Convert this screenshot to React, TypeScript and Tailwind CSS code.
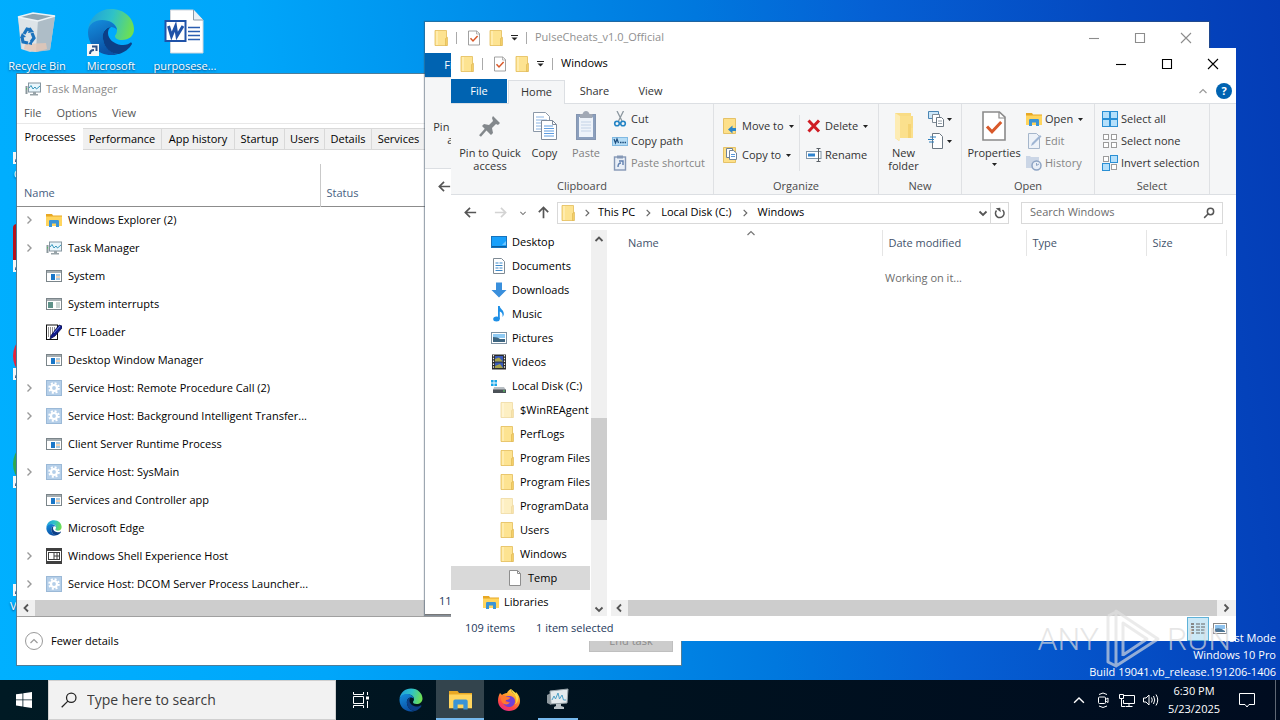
import type { ReactNode } from "react";

type IconProps = { className?: string };

/* ---------- icons ---------- */

function Folder({ className = "h-4 w-4", pale = false }: IconProps & { pale?: boolean }) {
  return (
    <svg viewBox="0 0 16 16" className={`shrink-0 ${className}`} opacity={pale ? 0.55 : 1} aria-hidden="true">
      <path d="M2 .5h11.500v15H2z" fill="#fde391" stroke="#e3bd58" strokeWidth=".8" />
      <path d="M3 1h2v14H3z" fill="#fff0bb" opacity=".7" />
      <path d="M12.500 8.500l2-1.200v8.200h-2z" fill="#f4cf68" stroke="#dcb44d" strokeWidth=".6" />
    </svg>
  );
}

function BigFolder() {
  return (
    <svg viewBox="0 0 32 32" className="h-8 w-8" aria-hidden="true">
      <path d="M7 3h16v3h2v22H12l-1 3-4-3z" fill="#f9dc85" />
      <path d="M7 3l5 3v25l-5-3z" fill="#fdecb4" />
      <path d="M12 6h11v12h2v10H12z" fill="#fbe08d" />
      <path d="M20 14h3v14h-3z" fill="#f1c95f" opacity=".55" />
    </svg>
  );
}

function ExplorerIcon({ className = "h-4 w-4" }: IconProps) {
  return (
    <svg viewBox="0 0 16 16" className={`shrink-0 ${className}`} aria-hidden="true">
      <path d="M0 2h6l1 1.500h9V14H0z" fill="#e8a824" />
      <path d="M0 4.500h16V14H0z" fill="#ffd55e" />
      <path d="M3 15V9.200q0-1.200 1.200-1.200h7.600Q13 8 13 9.200V15h-3v-3.500H6V15z" fill="#3a94d6" />
    </svg>
  );
}

function TaskMgrIcon({ className = "h-4 w-4" }: IconProps) {
  return (
    <svg viewBox="0 0 16 16" className={`shrink-0 ${className}`} aria-hidden="true">
      <path d="M.5 5h2v8h-2z" fill="#8b979c" />
      <path d="M1 7h1v1.500H1z" fill="#52b964" />
      <rect x="3.500" y="2" width="12" height="9" fill="#e9f6fc" stroke="#8696a0" />
      <path d="M4 7l2-2.500L8 8l2-2 1.500 2L15 5" fill="none" stroke="#3897bc" />
      <path d="M8 11h3v2h2v1.500H5V13h3z" fill="#98a3a8" />
    </svg>
  );
}

function AppIcon({ green = false }: { green?: boolean }) {
  return (
    <svg viewBox="0 0 16 16" className="h-4 w-4 shrink-0" aria-hidden="true">
      <rect x=".5" y="2.500" width="15" height="11" fill="#fff" stroke="#7b858a" />
      <path d="M1 3h14v2H1z" fill="#a5adb1" />
      <rect x={green ? 2 : 5} y="6" width={green ? 5 : 4} height="6" fill={green ? "#5e9188" : "#1976c8"} />
      <path d="M10 7h4M10 11h4" stroke={green ? "#97aca8" : "#4f93c4"} />
      <path d="M10 9h4" stroke={green ? "#97aca8" : "#e3a368"} />
    </svg>
  );
}

function GearIcon() {
  return (
    <svg viewBox="0 0 16 16" className="h-4 w-4 shrink-0" aria-hidden="true">
      <rect x=".5" y=".5" width="15" height="15" fill="#b5cfe9" stroke="#9bb9d7" />
      <circle cx="8" cy="8" r="4.800" fill="none" stroke="#fff" strokeWidth="2" strokeDasharray="2 1.770" />
      <circle cx="8" cy="8" r="3" fill="none" stroke="#fff" strokeWidth="2.200" />
    </svg>
  );
}

function CtfIcon() {
  return (
    <svg viewBox="0 0 16 16" className="h-4 w-4 shrink-0" aria-hidden="true">
      <rect x=".5" y="1" width="11" height="14.500" fill="#fff" stroke="#111" />
      <path d="M2 4h7M2 6h7M2 8h6M2 10h5M2 12h4" stroke="#222" strokeDasharray="1 1" />
      <path d="M5 11.500L13 1l3 1v2L9 12l-5 3z" fill="#101c8c" stroke="#060a40" strokeWidth=".7" />
      <path d="M8 9l6-7" stroke="#6e7fe8" />
    </svg>
  );
}

function ShellIcon() {
  return (
    <svg viewBox="0 0 16 16" className="h-4 w-4 shrink-0" aria-hidden="true">
      <rect x=".5" y="1" width="15" height="14" fill="#fff" stroke="#3f3f3f" />
      <path d="M0 0h16v3H0zM0 13h16v3H0z" fill="#3f3f3f" />
      <rect x="2.500" y="4.500" width="11" height="7" fill="#fff" stroke="#3f3f3f" />
      <path d="M8 5v6M8 8h5M11 5v6" stroke="#3f3f3f" />
    </svg>
  );
}

function EdgeIcon({ className = "h-4 w-4", id }: IconProps & { id: string }) {
  return (
    <svg viewBox="0 0 48 48" className={`shrink-0 ${className}`} aria-hidden="true">
      <defs>
        <linearGradient id={`${id}a`} x1="0" y1=".3" x2="1" y2=".5">
          <stop offset="0" stopColor="#1ea0dc" />
          <stop offset=".5" stopColor="#2fc2c8" />
          <stop offset="1" stopColor="#6fe04f" />
        </linearGradient>
        <linearGradient id={`${id}b`} x1="0" y1="0" x2=".4" y2="1">
          <stop offset="0" stopColor="#1490df" />
          <stop offset="1" stopColor="#0b51a5" />
        </linearGradient>
      </defs>
      <path d="M1 21C3 9 12 1 24 1c14 0 23 10 23 20 0 7-5 11-12 11-5 0-7-2-7-4 0-1 2-2 2-6 0-5-5-9-12-9C9 13 3 17 1 21z" fill={`url(#${id}a)`} />
      <path d="M1 24c0-8 7-12 14-12 8 0 14 4 15 10-1-2-4-3-6-3-6 0-9 5-8 12 1 8 7 14 15 15-2 1-5 1-7 1C11 47 1 37 1 24z" fill={`url(#${id}b)`} />
      <path d="M24 19c-7 1-9 7-8 12 1 9 8 15 16 15 6-2 10-5 13-10 0-1-1-2-2-1-3 2-6 2-9 2-7-1-13-6-13-12 0-3 1-5 3-6z" fill="#0c3f87" />
    </svg>
  );
}

function FirefoxIcon() {
  return (
    <svg viewBox="0 0 24 24" className="h-6 w-6" aria-hidden="true">
      <defs>
        <linearGradient id="fxBody" x1=".8" y1="0" x2=".3" y2="1">
          <stop offset="0" stopColor="#ffe24a" />
          <stop offset=".4" stopColor="#ff9a2a" />
          <stop offset=".75" stopColor="#ff4644" />
          <stop offset="1" stopColor="#e8298b" />
        </linearGradient>
      </defs>
      <path d="M3 5l2 2c1-1 3-2 5-2 1-2 2-3 4-4 0 3 3 4 4 6l1-3c3 3 4 6 4 9 0 6-5 10-11 10S1 18.500 1 12.500C1 9 2 7 3 5z" fill="url(#fxBody)" />
      <path d="M8 9c4-2 10-1 10 4 0 4-3 6-6 6s-5-2-6-4c2 1 5 1 6-1-2 0-4-1-4-3z" fill="#7240d6" />
      <path d="M5 7c2 0 4 1 4 2 3 0 4 0 4 1s-3 2-4 2l-1 2c1 1 3 1 5 0-1 2-3 3-6 2-3-2-4-6-2-9z" fill="#ff7a30" />
      <path d="M14 1c0 3 4 5 5 8 1 4 0 6-1 7 1 0 3-2 3-6 0-3-2-5-7-9z" fill="#ffdf45" />
    </svg>
  );
}

function RecycleIcon() {
  return (
    <svg viewBox="0 0 48 48" className="h-12 w-12" aria-hidden="true">
      <path d="M5 9l37-1-5 34-20 2-9-3z" fill="#c6d3db" />
      <path d="M5 9l20 4-2 31-14-3z" fill="#dde4e8" />
      <path d="M25 13l17-5-5 34-14 2z" fill="#aebdc7" />
      <path d="M5 9l15-4 22 3-17 5z" fill="#8fa5b2" stroke="#edf3f6" strokeWidth="1.400" />
      <path d="M12 36l21-1 1 6-11 3-12-3z" fill="#e5c7b5" opacity=".8" />
      <g fill="none" stroke="#1b73bd" strokeWidth="3.200">
        <path d="M11 26l3-5 4 1" />
        <path d="M19 25l2 5-3 4" />
        <path d="M15 35l-5-1-1-5" />
      </g>
      <path d="M17 19l4 5-6 1zM19 37l-4-1 4-4zM7 30l2-5 4 4z" fill="#1b73bd" />
    </svg>
  );
}

function WordIcon() {
  return (
    <svg viewBox="0 0 48 48" className="h-12 w-12" aria-hidden="true">
      <path d="M9.500 2h23l9.500 10v33H9.500z" fill="#fff" stroke="#cfd6dd" />
      <path d="M32.500 2v10H42" fill="#eaf0f5" stroke="#8b9aa8" />
      <path d="M27 19.500h12M27 23.500h12M27 27.500h12M27 31.500h12" stroke="#2a5db0" strokeWidth="1.500" />
      <rect x="4.500" y="13" width="20" height="20" fill="#fff" stroke="#1f52a8" strokeWidth="2" />
      <path d="M7.500 18l3 10 4-9.500 1.500 9.500 6-10" fill="none" stroke="#1f52a8" strokeWidth="3" />
    </svg>
  );
}

function Shortcut() {
  return (
    <svg viewBox="0 0 12 12" className="h-3 w-3" aria-hidden="true">
      <path d="M0 0h12v12H0z" fill="#f7f7f7" />
      <path d="M3 10c0-3 1-4 4-4M5 2.500h4.500V7" fill="none" stroke="#2b4f86" strokeWidth="2" />
    </svg>
  );
}

function CheckDoc({ className = "h-4 w-4" }: IconProps) {
  return (
    <svg viewBox="0 0 16 16" className={`shrink-0 ${className}`} aria-hidden="true">
      <path d="M2.500 1h8.200L13.500 3.600v11.400h-11z" fill="#fff" stroke="#8a8a8a" strokeWidth=".8" />
      <path d="M10.500 1v3h3" fill="none" stroke="#8a8a8a" strokeWidth=".6" />
      <path d="M4.500 8.200l2.500 2.700L11.600 6" fill="none" stroke="#d9592a" strokeWidth="1.500" />
    </svg>
  );
}

function PinIcon() {
  return (
    <svg viewBox="0 0 32 32" className="h-8 w-8" aria-hidden="true">
      <path d="M19 6l7 7-2 2-2-1-4 4 1 5-2 2-9-9 2-2 5 1 4-4-1-3z" fill="#83888c" />
      <path d="M13 18l-7 8" stroke="#83888c" strokeWidth="2.500" />
    </svg>
  );
}

function CopyIcon() {
  return (
    <svg viewBox="0 0 32 32" className="h-8 w-8" aria-hidden="true">
      <path d="M4.500 2.500h12l4 4v15h-16z" fill="#fff" stroke="#8b98a8" />
      <path d="M7 7h8M7 10h11M7 13h6M7 16h6M7 19h6" stroke="#8ab4e4" />
      <path d="M12.500 10.500h11l4 4v15h-15z" fill="#fff" stroke="#7e8a9a" />
      <path d="M23.500 10.500v4h4" fill="none" stroke="#7e8a9a" />
      <path d="M15 16h9M15 18.500h10M15 21h10M15 23.500h10M15 26h10" stroke="#5e9ce0" />
    </svg>
  );
}

function PasteIcon() {
  return (
    <svg viewBox="0 0 32 32" className="h-8 w-8" aria-hidden="true">
      <rect x="6.500" y="4.500" width="19" height="25" fill="#8b9fbd" stroke="#8495b0" />
      <rect x="9" y="7" width="14" height="20" fill="#eef3fa" />
      <path d="M11 12h10M11 15h10M11 18h10M11 21h10" stroke="#c3d2e6" />
      <path d="M10 4h2.500q1-3 3.500-3T19.500 4h3v4H10z" fill="#a2a9b5" />
    </svg>
  );
}

function CutIcon() {
  return (
    <svg viewBox="0 0 16 16" className="h-4 w-4 shrink-0" aria-hidden="true">
      <path d="M5 0l5 10M11.500 0L6.500 10" stroke="#8c979f" strokeWidth="1.300" />
      <circle cx="5" cy="12.500" r="2.300" fill="none" stroke="#2383c4" strokeWidth="1.600" />
      <circle cx="11" cy="12.500" r="2.300" fill="none" stroke="#2383c4" strokeWidth="1.600" />
    </svg>
  );
}

function CopyPathIcon() {
  return (
    <svg viewBox="0 0 16 16" className="h-4 w-4 shrink-0" aria-hidden="true">
      <rect x=".5" y="4.500" width="15" height="8" fill="#b4dcf6" stroke="#80b9e2" />
      <path d="M2 6l1.500 4L5 6l1.500 4" fill="none" stroke="#1c4c7c" strokeWidth="1.200" />
      <path d="M8 9.500h6" stroke="#1c4c7c" strokeWidth="1.300" strokeDasharray="1.500 .8" />
    </svg>
  );
}

function PasteShortcutIcon() {
  return (
    <svg viewBox="0 0 16 16" className="h-4 w-4 shrink-0" aria-hidden="true">
      <rect x="2.500" y="2" width="11" height="13" fill="#e9eff7" stroke="#8598b6" strokeWidth="1.400" />
      <path d="M5 .5h6v3H5z" fill="#8598b6" />
      <path d="M6 12c0-3 1-4 3-4M7 6h4v4" fill="none" stroke="#5f7fae" strokeWidth="1.400" />
    </svg>
  );
}

function MoveIcon() {
  return (
    <svg viewBox="0 0 16 16" className="h-4 w-4 shrink-0" aria-hidden="true">
      <path d="M.5.5h12v15H.5z" fill="#fde08a" stroke="#e0b850" strokeWidth=".8" />
      <path d="M5 11.500L9.500 7.500v2.600H13V13H9.500v2.600z" fill="#2c86c9" />
    </svg>
  );
}

function CopyToIcon() {
  return (
    <svg viewBox="0 0 16 16" className="h-4 w-4 shrink-0" aria-hidden="true">
      <path d="M.5.5h12v15H.5z" fill="#fde08a" stroke="#e0b850" strokeWidth=".8" />
      <path d="M3.500 1.500h6v9h-6z" fill="#fff" stroke="#6f8299" />
      <path d="M6.500 3.500h4l3 2.500v6.500h-7z" fill="#fff" stroke="#6f8299" />
      <path d="M8 7.500h4M8 9.500h4" stroke="#5a98d8" />
    </svg>
  );
}

function DeleteIcon() {
  return (
    <svg viewBox="0 0 16 16" className="h-4 w-4 shrink-0" aria-hidden="true">
      <path d="M2.500 2.500l10.500 11M13 2.500l-10.500 11" stroke="#cf1c24" strokeWidth="3" />
    </svg>
  );
}

function RenameIcon() {
  return (
    <svg viewBox="0 0 16 16" className="h-4 w-4 shrink-0" aria-hidden="true">
      <rect x=".5" y="4.500" width="14.500" height="7" fill="#fff" stroke="#8296a8" />
      <path d="M2 6.500h7v3H2z" fill="#2f83ce" />
      <path d="M12.500 2v12M10.500 1.500h4M10.500 14.500h4" stroke="#5a6066" />
    </svg>
  );
}

function NewItemIcon() {
  return (
    <svg viewBox="0 0 16 16" className="h-4 w-4 shrink-0" aria-hidden="true">
      <path d="M.5.500h10v7H.5z" fill="#cde7f8" stroke="#4b86b4" />
      <path d="M4.500 3.500h7v8h-7z" fill="#fff" stroke="#7f8b96" />
      <path d="M8.500 6.500h5l2 2v7h-7z" fill="#fff" stroke="#6b7782" />
      <path d="M10 10h4M10 12.500h4" stroke="#96a1ab" />
    </svg>
  );
}

function EasyAccessIcon() {
  return (
    <svg viewBox="0 0 16 16" className="h-4 w-4 shrink-0" aria-hidden="true">
      <path d="M4.500.5h7l3 3v12h-10z" fill="#fff" stroke="#6b7782" />
      <path d="M2 4h6M0 6.500h6M1 9h5" stroke="#2d7fbe" strokeWidth="1.200" />
    </svg>
  );
}

function EditIcon() {
  return (
    <svg viewBox="0 0 16 16" className="h-4 w-4 shrink-0" aria-hidden="true">
      <path d="M2.500.5h8l3 3v12h-11z" fill="#edf2f8" stroke="#a5b6cb" />
      <path d="M5 13l1-3 8-8 1.500 1.500-8 8z" fill="#9fb5d3" />
    </svg>
  );
}

function HistoryIcon() {
  return (
    <svg viewBox="0 0 16 16" className="h-4 w-4 shrink-0" aria-hidden="true">
      <path d="M0 1h4l1 1h8v11H0z" fill="#cbd6e6" />
      <circle cx="10.500" cy="10.500" r="4.500" fill="#e9eff7" stroke="#8ea4c4" strokeWidth="1.500" />
      <path d="M10.500 8v2.500L13 9" fill="none" stroke="#8ea4c4" />
    </svg>
  );
}

const SQUARES = [
  [1, 1],
  [9, 1],
  [1, 9],
  [9, 9],
];

function SelectIcon({ on }: { on: boolean[] }) {
  return (
    <svg viewBox="0 0 16 16" className="h-4 w-4 shrink-0" aria-hidden="true">
      {SQUARES.map(([x, y], i) => (
        <rect
          key={i}
          x={on[i] ? x - 0.5 : x + 0.5}
          y={on[i] ? y - 0.5 : y + 0.5}
          width={on[i] ? 7 : 5}
          height={on[i] ? 7 : 5}
          fill={on[i] ? "#b5e0fb" : "#fff"}
          stroke={on[i] ? "#2a8fd4" : "#9c9c9c"}
        />
      ))}
    </svg>
  );
}

function Caret({ className = "" }: IconProps) {
  return (
    <svg viewBox="0 0 5 3" className={`h-[3px] w-[5px] shrink-0 ${className}`} aria-hidden="true">
      <path d="M0 0h5L2.500 3z" fill="#222" />
    </svg>
  );
}

function Chevron({ className = "", d, color = "#555", stroke = 1.8 }: IconProps & { d: "up" | "down" | "left" | "right"; color?: string; stroke?: number }) {
  const paths = { up: "M1.500 7l3.500-3.500L8.500 7", down: "M1.500 3.500L5 7l3.500-3.500", left: "M7 1.500L3.500 5 7 8.500", right: "M3.500 1.500L7 5 3.500 8.500" };
  return (
    <svg viewBox="0 0 10 10" className={`h-2.5 w-2.5 shrink-0 ${className}`} aria-hidden="true">
      <path d={paths[d]} fill="none" stroke={color} strokeWidth={stroke} />
    </svg>
  );
}

function Arrow({ d, color }: { d: "left" | "right" | "up"; color: string }) {
  const paths = { left: "M14 8H3M7.500 3L2.500 8l5 5", right: "M2 8h11M8.500 3l5 5-5 5", up: "M8 14V3M3 7.500l5-5 5 5" };
  return (
    <svg viewBox="0 0 16 16" className="h-[15px] w-[15px] shrink-0" aria-hidden="true">
      <path d={paths[d]} fill="none" stroke={color} strokeWidth="1.800" />
    </svg>
  );
}

function DesktopIcon() {
  return (
    <svg viewBox="0 0 16 16" className="h-4 w-4 shrink-0" aria-hidden="true">
      <rect x=".5" y="2.500" width="15" height="11" fill="#18a0fb" stroke="#1673bd" />
      <path d="M1 12.500h14" stroke="#0c5e9e" />
      <path d="M11 11l4-4v4z" fill="#6cc5ff" />
    </svg>
  );
}

function DocumentsIcon() {
  return (
    <svg viewBox="0 0 16 16" className="h-4 w-4 shrink-0" aria-hidden="true">
      <path d="M2.500.5h8l3 3v12h-11z" fill="#fff" stroke="#7e8a94" />
      <path d="M4.500 5h3M8.500 5h3M4.500 7.500h7M4.500 10h3M8.500 10h3M4.500 12.500h7" stroke="#3d89c9" strokeWidth="1.200" />
    </svg>
  );
}

function DownloadsIcon() {
  return (
    <svg viewBox="0 0 16 16" className="h-4 w-4 shrink-0" aria-hidden="true">
      <path d="M5 .5h6V8h4.500L8 15.500.5 8H5z" fill="#3a8fdc" />
    </svg>
  );
}

function MusicIcon() {
  return (
    <svg viewBox="0 0 16 16" className="h-4 w-4 shrink-0" aria-hidden="true">
      <ellipse cx="5.500" cy="13" rx="3.300" ry="2.500" fill="#1e8fe6" />
      <path d="M7 0h1.800c0 3 4.500 4 4 8.500-.3 1-.8 2-1.300 2.500.5-3-.5-4.500-2.700-5.500V13H7z" fill="#1e8fe6" />
    </svg>
  );
}

function PicturesIcon() {
  return (
    <svg viewBox="0 0 16 16" className="h-4 w-4 shrink-0" aria-hidden="true">
      <rect x=".5" y="2.500" width="15" height="11" fill="#fff" stroke="#7d92a3" />
      <path d="M2 4h12v4H2z" fill="#8fcaf3" />
      <path d="M2 7q5 0 7 2h5v3H2z" fill="#3d6580" />
    </svg>
  );
}

function VideosIcon() {
  return (
    <svg viewBox="0 0 16 16" className="h-4 w-4 shrink-0" aria-hidden="true">
      <path d="M1 .5h14v15H1z" fill="#2a2a2a" />
      <path d="M2.500 1v14M13.500 1v14" stroke="#eee" strokeWidth="1.200" strokeDasharray="1.500 1.300" />
      <path d="M4 2h8v5.500H4zM4 8.500h8V14H4z" fill="#3859b8" />
      <path d="M4 7.500V5l4-1.500 4 4zM4 14v-2l5-2 3 4z" fill="#a8a34a" />
    </svg>
  );
}

function DiskIcon() {
  return (
    <svg viewBox="0 0 16 16" className="h-4 w-4 shrink-0" aria-hidden="true">
      <path d="M0 2h2.600v2.600H0zM3.400 2H6v2.600H3.400zM0 5.400h2.600V8H0zM3.400 5.400H6V8H3.400z" fill="#18a6e8" />
      <path d="M3 9h10l2 3H2z" fill="#b9bfc4" />
      <path d="M2 11.500h13V15H2z" fill="#4b5157" />
      <path d="M12 13h2" stroke="#5de06a" />
    </svg>
  );
}

function FileIcon() {
  return (
    <svg viewBox="0 0 16 16" className="h-4 w-4 shrink-0" aria-hidden="true">
      <path d="M2.500.5h8l3 3v12h-11z" fill="#fff" stroke="#8e8e8e" />
      <path d="M10.500.5v3h3" fill="none" stroke="#8e8e8e" />
    </svg>
  );
}

function SearchIcon({ className = "h-4 w-4", color = "#555", stroke = 1.6 }: IconProps & { color?: string; stroke?: number }) {
  return (
    <svg viewBox="0 0 16 16" className={`shrink-0 ${className}`} aria-hidden="true">
      <circle cx="10" cy="6" r="4.200" fill="none" stroke={color} strokeWidth={stroke} />
      <path d="M7 9l-5.500 5.500" stroke={color} strokeWidth={stroke} />
    </svg>
  );
}

/* ---------- explorer window ---------- */

function BigButton({ icon, children, className, dim = false }: { icon: ReactNode; children: ReactNode; className: string; dim?: boolean }) {
  return (
    <button type="button" className={`flex shrink-0 flex-col items-center pt-1.5 leading-[13px] ${dim ? "text-[#7f7f7f]" : ""} ${className}`}>
      {icon}
      <span className="mt-1">{children}</span>
    </button>
  );
}

function SmallButton({ icon, children, label, caret = false, dim = false }: { icon: ReactNode; children?: string; label?: string; caret?: boolean; dim?: boolean }) {
  return (
    <button type="button" aria-label={label} className={`flex h-[22px] items-center gap-[3px] whitespace-nowrap ${dim ? "text-[#868686]" : ""}`}>
      {icon}
      {children}
      {caret && <Caret className={children ? "ml-0.5" : ""} />}
    </button>
  );
}

function Group({ label, className, children }: { label: string; className: string; children: ReactNode }) {
  return (
    <section className={`flex shrink-0 flex-col border-r border-[#dfe1e4] ${className}`}>
      <div className="flex h-[74px] items-start">{children}</div>
      <h3 className="text-center leading-4 text-[#4a4a4a]">{label}</h3>
    </section>
  );
}

function PinButton() {
  return (
    <BigButton icon={<PinIcon />} className="w-[78px]">
      Pin to Quick access
    </BigButton>
  );
}

function Ribbon() {
  return (
    <>
      <Group label="Clipboard" className="w-[263px]">
        <PinButton />
        <BigButton icon={<CopyIcon />} className="w-[31px]">Copy</BigButton>
        <BigButton icon={<PasteIcon />} dim className="w-[52px]">Paste</BigButton>
        <div className="flex flex-col pt-1">
          <SmallButton icon={<CutIcon />}>Cut</SmallButton>
          <SmallButton icon={<CopyPathIcon />}>Copy path</SmallButton>
          <SmallButton icon={<PasteShortcutIcon />} dim>Paste shortcut</SmallButton>
        </div>
      </Group>
      <Group label="Organize" className="w-[165px]">
        <div className="mt-[11px] ml-[9px] flex h-[56px] w-[77px] flex-col gap-[7px] border-r border-[#dfe1e4]">
          <SmallButton icon={<MoveIcon />} caret>Move to</SmallButton>
          <SmallButton icon={<CopyToIcon />} caret>Copy to</SmallButton>
        </div>
        <div className="mt-[11px] ml-1.5 flex h-[56px] flex-col gap-[7px]">
          <SmallButton icon={<DeleteIcon />} caret>Delete</SmallButton>
          <SmallButton icon={<RenameIcon />}>Rename</SmallButton>
        </div>
      </Group>
      <Group label="New" className="w-[83px]">
        <BigButton icon={<BigFolder />} className="w-[49px]">New folder</BigButton>
        <div className="flex flex-col pt-1">
          <SmallButton icon={<NewItemIcon />} label="New item" caret />
          <SmallButton icon={<EasyAccessIcon />} label="Easy access" caret />
        </div>
      </Group>
      <Group label="Open" className="w-[133px]">
        <BigButton icon={<CheckDoc className="h-8 w-8" />} className="w-[64px]">
          <span className="flex flex-col items-center gap-1">
            Properties
            <Caret />
          </span>
        </BigButton>
        <div className="flex flex-col pt-1">
          <SmallButton icon={<ExplorerIcon />} caret>Open</SmallButton>
          <SmallButton icon={<EditIcon />} dim>Edit</SmallButton>
          <SmallButton icon={<HistoryIcon />} dim>History</SmallButton>
        </div>
      </Group>
      <Group label="Select" className="w-[115px]">
        <div className="flex flex-col pl-[7px] pt-1">
          <SmallButton icon={<SelectIcon on={[true, true, true, true]} />}>Select all</SmallButton>
          <SmallButton icon={<SelectIcon on={[false, false, false, false]} />}>Select none</SmallButton>
          <SmallButton icon={<SelectIcon on={[false, true, true, false]} />}>Invert selection</SmallButton>
        </div>
      </Group>
    </>
  );
}

function WindowButtons({ color }: { color: string }) {
  return (
    <div className="ml-auto flex">
      {[
        ["Minimize", "M0 5.500h10"],
        ["Maximize", "M.5.5h9v9h-9z"],
        ["Close", "M0 0l10 10M10 0L0 10"],
      ].map(([label, d]) => (
        <button key={label} type="button" aria-label={label} className="flex h-[30px] w-[46px] items-center justify-center">
          <svg viewBox="0 0 10 10" className="h-2.5 w-2.5 overflow-visible" aria-hidden="true">
            <path d={d} fill="none" stroke={color} strokeWidth="1.100" />
          </svg>
        </button>
      ))}
    </div>
  );
}

type ExplorerProps = {
  title: string;
  active: boolean;
  className: string;
  tabs?: ReactNode;
  ribbon: ReactNode;
  address?: ReactNode;
  status: ReactNode;
  children?: ReactNode;
};

function ExplorerWindow({ title, active, className, tabs, ribbon, address, status, children }: ExplorerProps) {
  return (
    <section aria-label={title} className={`absolute flex flex-col bg-white text-[11px] ${className}`}>
      <header className="flex h-[31px] shrink-0 items-center pl-2">
        <Folder />
        <span className="mx-[7px] h-3 w-px bg-[#aaa]" />
        <CheckDoc className="ml-0.5 h-4 w-4" />
        <Folder className="ml-1.5 h-4 w-4" />
        <svg viewBox="0 0 7 6" className="ml-[7px] h-1.5 w-[7px]" aria-hidden="true">
          <path d="M0 .5h7" stroke="#222" />
          <path d="M.5 2.500h6l-3 3z" fill="#222" />
        </svg>
        <span className="mx-2 h-3 w-px bg-[#aaa]" />
        <h2 className={active ? "text-black" : "text-[#8f8f8f]"}>{title}</h2>
        <WindowButtons color={active ? "#000" : "#8c8c8c"} />
      </header>
      <div className="flex h-6 shrink-0 text-[#333]">
        <button type="button" className="w-14 bg-[#0063b1] text-white">File</button>
        {tabs}
      </div>
      <div className="flex h-[92px] shrink-0 overflow-hidden border-y border-[#dcdfe3] bg-[#f5f6f7] text-[#333]">{ribbon}</div>
      <div className="flex h-[35px] shrink-0 items-center pl-3">
        <Arrow d="left" color="#555" />
        {address}
      </div>
      <div className="flex min-h-0 flex-1">{children}</div>
      <footer className="flex h-[25px] shrink-0 items-center gap-[21px] pl-3.5 text-[#1e395b]">{status}</footer>
    </section>
  );
}

function RibbonTabs() {
  return (
    <>
      <button type="button" className="relative top-px ml-px h-6 w-[57px] border-x border-t border-[#dcdfe3] bg-[#f5f6f7]">Home</button>
      <button type="button" className="w-[59px]">Share</button>
      <button type="button" className="w-[53px]">View</button>
      <div className="ml-auto flex items-center gap-2 pr-1">
        <Chevron d="up" color="#9a9a9a" stroke={1.2} />
        <button type="button" aria-label="Help" className="h-4 w-4 rounded-full bg-[#0063b1] leading-4 font-bold text-white">?</button>
      </div>
    </>
  );
}

type TreeItem = { icon: ReactNode; label: string; indent: string; selected?: boolean };

const TREE: TreeItem[] = [
  { icon: <DesktopIcon />, label: "Desktop", indent: "pl-10" },
  { icon: <DocumentsIcon />, label: "Documents", indent: "pl-10" },
  { icon: <DownloadsIcon />, label: "Downloads", indent: "pl-10" },
  { icon: <MusicIcon />, label: "Music", indent: "pl-10" },
  { icon: <PicturesIcon />, label: "Pictures", indent: "pl-10" },
  { icon: <VideosIcon />, label: "Videos", indent: "pl-10" },
  { icon: <DiskIcon />, label: "Local Disk (C:)", indent: "pl-10" },
  { icon: <Folder pale />, label: "$WinREAgent", indent: "pl-12" },
  { icon: <Folder />, label: "PerfLogs", indent: "pl-12" },
  { icon: <Folder />, label: "Program Files", indent: "pl-12" },
  { icon: <Folder />, label: "Program Files", indent: "pl-12" },
  { icon: <Folder pale />, label: "ProgramData", indent: "pl-12" },
  { icon: <Folder />, label: "Users", indent: "pl-12" },
  { icon: <Folder />, label: "Windows", indent: "pl-12" },
  { icon: <FileIcon />, label: "Temp", indent: "pl-14", selected: true },
  { icon: <ExplorerIcon />, label: "Libraries", indent: "pl-8" },
];

function AddressBar() {
  return (
    <>
      <span className="ml-[15px] flex items-center">
        <Arrow d="right" color="#d3d3d3" />
      </span>
      <Chevron d="down" color="#777" stroke={1.4} className="ml-2.5 scale-75" />
      <span className="ml-2 flex">
        <Arrow d="up" color="#555" />
      </span>
      <div className="ml-1.5 flex h-[22px] min-w-0 flex-1 items-center border border-[#d9d9d9] pl-0.5 whitespace-nowrap">
        <Folder />
        <Chevron d="right" color="#666" stroke={1.3} className="mx-1.5 scale-90" />
        This PC
        <Chevron d="right" color="#666" stroke={1.3} className="mx-2 scale-90" />
        Local Disk (C:)
        <Chevron d="right" color="#666" stroke={1.3} className="mx-2 scale-90" />
        Windows
        <button type="button" aria-label="Previous locations" className="ml-auto pr-0.5">
          <Chevron d="down" color="#555" />
        </button>
        <button type="button" aria-label="Refresh" className="flex h-full w-[18px] items-center justify-center border-l border-[#d9d9d9]">
          <svg viewBox="0 0 12 12" className="h-3 w-3" aria-hidden="true">
            <path d="M2.500 3.500A4.300 4.300 0 1 0 8.500 3" fill="none" stroke="#555" strokeWidth="1.500" />
            <path d="M2 1h4.500v4.500z" fill="#555" transform="rotate(-8 4 3)" />
          </svg>
        </button>
      </div>
      <label className="ml-3 mr-[13px] flex h-[22px] w-[202px] items-center border border-[#d9d9d9] pl-2 pr-[7px]">
        <input type="text" aria-label="Search Windows" placeholder="Search Windows" className="min-w-0 flex-1 outline-none placeholder:text-[#6d6d6d]" />
        <SearchIcon className="h-3 w-3" stroke={2} />
      </label>
    </>
  );
}

function ExplorerBody() {
  return (
    <>
      <nav aria-label="Folders" className="w-[139px] shrink-0 overflow-hidden">
        {TREE.map((t, i) => (
          <button key={i} type="button" className={`flex h-6 w-full items-center gap-[5px] text-left whitespace-nowrap text-black ${t.indent} ${t.selected ? "bg-[#d9d9d9]" : ""}`}>
            {t.icon}
            {t.label}
          </button>
        ))}
      </nav>
      <div className="mr-1 ml-px flex w-4 shrink-0 flex-col items-center bg-[#f0f0f0] pb-0.5">
        <Chevron d="up" className="my-1" />
        <div className="mt-[170px] h-[102px] w-full bg-[#cdcdcd]" />
        <Chevron d="down" className="mt-auto" />
      </div>
      <div className="flex min-w-0 flex-1 flex-col">
        <table className="w-full table-fixed text-[#43536b]">
          <thead>
            <tr className="h-[26px] text-left">
              <th className="relative border-r border-[#e5e5e5] pl-[17px] font-normal">
                Name
                <span className="absolute top-0 left-1/2 flex">
                  <Chevron d="up" color="#777" stroke={1.2} className="-mt-0.5" />
                </span>
              </th>
              <th className="w-[144px] border-r border-[#e5e5e5] pl-1.5 font-normal">Date modified</th>
              <th className="w-[120px] border-r border-[#e5e5e5] pl-1.5 font-normal">Type</th>
              <th className="w-[80px] border-r border-[#e5e5e5] pl-1.5 font-normal">Size</th>
              <td className="w-[10px]" />
            </tr>
          </thead>
        </table>
        <p className="mt-3.5 text-center text-[#6d6d6d]">Working on it...</p>
        <div className="mt-auto flex h-4 items-center bg-[#f0f0f0] px-[3px]">
          <Chevron d="left" />
          <div className="mx-1 h-full flex-1 bg-[#cdcdcd]" />
          <Chevron d="right" className="mr-0.5" />
        </div>
      </div>
    </>
  );
}

/* ---------- task manager ---------- */

const PROCESSES: { name: string; icon: ReactNode; open?: boolean }[] = [
  { name: "Windows Explorer (2)", icon: <ExplorerIcon />, open: true },
  { name: "Task Manager", icon: <TaskMgrIcon />, open: true },
  { name: "System", icon: <AppIcon /> },
  { name: "System interrupts", icon: <AppIcon green /> },
  { name: "CTF Loader", icon: <CtfIcon /> },
  { name: "Desktop Window Manager", icon: <AppIcon /> },
  { name: "Service Host: Remote Procedure Call (2)", icon: <GearIcon />, open: true },
  { name: "Service Host: Background Intelligent Transfer...", icon: <GearIcon />, open: true },
  { name: "Client Server Runtime Process", icon: <AppIcon /> },
  { name: "Service Host: SysMain", icon: <GearIcon />, open: true },
  { name: "Services and Controller app", icon: <AppIcon /> },
  { name: "Microsoft Edge", icon: <EdgeIcon id="edgeRow" /> },
  { name: "Windows Shell Experience Host", icon: <ShellIcon />, open: true },
  { name: "Service Host: DCOM Server Process Launcher...", icon: <GearIcon />, open: true },
];

const TABS = [
  ["Performance", "w-[79px]"],
  ["App history", "w-[73px]"],
  ["Startup", "w-[50px]"],
  ["Users", "w-[40px]"],
  ["Details", "w-[47px]"],
  ["Services", "w-[54px]"],
];

function TaskManager() {
  return (
    <section aria-label="Task Manager" className="absolute top-[73px] left-4 flex w-[666px] flex-col border border-[#4f7d99] bg-white text-[11px] text-black">
      <header className="flex h-[30px] items-center gap-[5px] pl-2 text-[#8a8a8a]">
        <TaskMgrIcon />
        Task Manager
      </header>
      <div className="flex h-5 gap-[15px] border-b border-[#e8e8e8] pl-[7px] text-[#555]">
        <button type="button">File</button>
        <button type="button">Options</button>
        <button type="button">View</button>
      </div>
      <div className="mt-[3px] flex h-[23px] items-end">
        <button type="button" className="h-[23px] w-[66px] pb-0.5">Processes</button>
        {TABS.map(([label, width]) => (
          <button key={label} type="button" className={`h-[22px] border border-l-0 border-[#d9d9d9] bg-[#f0f0f0] first-of-type:border-l ${width}`}>
            {label}
          </button>
        ))}
      </div>
      <table className="mt-3.5 w-full table-fixed">
        <thead>
          <tr className="h-[42px] border-b border-[#8c8c8c] text-left align-bottom text-[#47617f]">
            <th className="w-[303px] border-r border-[#c9c9c9] pb-1 pl-[7px] font-normal">Name</th>
            <th className="pb-1 pl-1.5 font-normal">Status</th>
          </tr>
        </thead>
        <tbody>
          {PROCESSES.map((p) => (
            <tr key={p.name} className="h-7">
              <td className="p-0">
                <div className="flex items-center whitespace-nowrap">
                  <span className="flex w-[29px] shrink-0 pl-[7px]">{p.open && <Chevron d="right" color="#999" stroke={1.4} />}</span>
                  {p.icon}
                  <span className="ml-1.5">{p.name}</span>
                </div>
              </td>
              <td />
            </tr>
          ))}
        </tbody>
      </table>
      <div className="mt-0.5 flex h-4 items-center bg-[#f0f0f0] px-1">
        <Chevron d="left" />
        <div className="ml-1 h-full flex-1 bg-[#cdcdcd]" />
      </div>
      <footer className="flex h-[49px] items-center border-t border-[#a0a0a0] pl-2">
        <button type="button" className="flex items-center gap-2">
          <span className="flex h-[18px] w-[18px] items-center justify-center rounded-full border border-[#9a9a9a]">
            <Chevron d="up" color="#999" stroke={1.2} />
          </span>
          Fewer details
        </button>
        <button type="button" className="mr-2 ml-auto h-[21px] w-[84px] border border-[#bfbfbf] bg-[#cccccc] text-[#8a8a8a]">End task</button>
      </footer>
    </section>
  );
}

/* ---------- desktop ---------- */

function DesktopItem({ icon, label, shortcut = false }: { icon: ReactNode; label?: string; shortcut?: boolean }) {
  return (
    <a href="#" className="flex h-[108px] w-[74px] flex-col items-center pt-2">
      <span className="relative flex h-12 w-12 items-center justify-center">
        {icon}
        {shortcut && (
          <span className="absolute bottom-0 left-0">
            <Shortcut />
          </span>
        )}
      </span>
      {label && <span className="mt-0.5 whitespace-nowrap text-white [text-shadow:0_1px_2px_rgba(0,40,90,0.8)]">{label}</span>}
    </a>
  );
}

function Disc({ className }: IconProps) {
  return <span className={`h-12 w-12 rounded-full ${className}`} />;
}

function Taskbar() {
  return (
    <footer className="flex h-10 shrink-0 items-center bg-linear-to-r from-[#001a24] via-[#00121f] to-[#000c20] text-white">
      <button type="button" aria-label="Start" className="flex h-full w-12 items-center justify-center">
        <svg viewBox="0 0 16 16" className="h-4 w-4" aria-hidden="true">
          <path d="M0 2.300l6.500-.9v6.100H0zM7.300 1.300L16 0v7.500H7.300zM0 8.300h6.500v6.200L0 13.600zM7.300 8.300H16V16l-8.700-1.200z" fill="#fff" />
        </svg>
      </button>
      <label className="flex h-full w-[288px] items-center gap-[9px] border border-[#d0d0d0] bg-[#f2f2f2] pl-[11px]">
        <SearchIcon className="h-[18px] w-[18px]" color="#222" stroke={1.1} />
        <input type="text" aria-label="Type here to search" placeholder="Type here to search" className="min-w-0 flex-1 text-sm outline-none placeholder:text-[#3c3c3c]" />
      </label>
      <button type="button" aria-label="Task view" className="flex h-full w-[49px] items-center justify-center">
        <svg viewBox="0 0 16 16" className="h-4 w-4" fill="none" stroke="#fff" aria-hidden="true">
          <path d="M.5 0v2.500h10V0M.5 16v-2.500h10V16M.5 4.500h10v7H.5zM14.500 0v3M14.500 9v7" />
          <path d="M13 4.500h3v3h-3z" fill="#fff" stroke="none" />
        </svg>
      </button>
      <button type="button" aria-label="Microsoft Edge" className="ml-px flex h-full w-[50px] items-center justify-center">
        <EdgeIcon id="edgeBar" className="h-6 w-6" />
      </button>
      <button type="button" aria-label="File Explorer" className="flex h-full w-12 items-center justify-center border-b-2 border-[#76b9ed] bg-[#33444d]">
        <ExplorerIcon className="h-[23px] w-[23px]" />
      </button>
      <button type="button" aria-label="Firefox" className="flex h-full w-[50px] items-center justify-center">
        <FirefoxIcon />
      </button>
      <button type="button" aria-label="Task Manager" className="ml-1 flex h-full w-10 items-center justify-center border-b-2 border-[#76b9ed]">
        <svg viewBox="0 0 24 24" className="h-6 w-6" aria-hidden="true">
          <path d="M1 8l4-2v12l-4-2z" fill="#8e999f" />
          <path d="M4 4l18-2-1 14-16 1z" fill="#e4eaed" stroke="#9aa5ab" />
          <path d="M6 13l2-4 1.500 3L12 6l1.500 6L16 8l1.500 5H20" fill="none" stroke="#4b9fc6" />
          <path d="M10 17h5v2l3 1v2H8v-2l2-1z" fill="#b9c2c7" />
        </svg>
      </button>
      <div className="ml-auto flex h-full items-center">
        <Chevron d="up" color="#fff" stroke={1} className="mr-2 h-3.5 w-3.5" />
        <svg viewBox="0 0 18 18" className="mr-1.5 h-[18px] w-[18px]" fill="none" stroke="#fff" aria-hidden="true">
          <rect x="4.500" y="6" width="7" height="6.500" rx="1" />
          <path d="M11.500 8.500l2.500-1.500v4.500l-2.500-1.500M5 3.500Q9 .5 13 3.500M5 15q4 3 8 0" />
        </svg>
        <svg viewBox="0 0 18 18" className="mr-1.5 h-[18px] w-[18px]" fill="none" stroke="#fff" aria-hidden="true">
          <path d="M6 4.500h10.500v8H5.500V9M11 12.500v3M7.500 15.500h7" />
          <path d="M1.500 3.500h4v4h-4zM3.500 7.500v8H7" />
        </svg>
        <svg viewBox="0 0 18 18" className="mr-1.5 h-[18px] w-[18px]" fill="none" stroke="#fff" aria-hidden="true">
          <path d="M1.500 7h2.500l3-3v10l-3-3H1.500z" />
          <path d="M9.500 6.500q1.500 2.500 0 5M11.500 5q2.500 4 0 8M14 3.500q3.500 5.500 0 11" />
        </svg>
        <time className="w-14 text-center text-[11px] leading-[18px]">
          6:30 PM
          <br />
          5/23/2025
        </time>
        <button type="button" aria-label="Notifications" className="ml-2 flex h-full w-[34px] items-center justify-center">
          <svg viewBox="0 0 16 16" className="h-4 w-4" fill="none" stroke="#fff" aria-hidden="true">
            <path d="M.5 1.500h15v11H10L8 15l-2-2.500H.5z" />
          </svg>
        </button>
        <span className="ml-[11px] mr-1 h-full w-px bg-[#5f6875]" />
      </div>
    </footer>
  );
}

export default function App() {
  return (
    <div className="flex h-screen flex-col overflow-hidden font-['Open_Sans',sans-serif] text-[11px]">
      <main className="relative min-h-0 flex-1 overflow-hidden bg-[linear-gradient(83deg,#00b0ff_0%,#00a6fa_24%,#008eea_42%,#0078de_57%,#0560d4_70%,#0448c0_88%,#043cb6_100%)]">
        <div className="flex">
          <div className="flex flex-col">
            <DesktopItem icon={<RecycleIcon />} label="Recycle Bin" />
            <DesktopItem icon={null} label="CCleaner" shortcut />
            <DesktopItem icon={<span className="h-12 w-12 rounded bg-[#b5121b]" />} shortcut />
            <DesktopItem icon={<Disc className="bg-[#e5243b]" />} shortcut />
            <DesktopItem icon={<Disc className="bg-[#2fa84f]" />} shortcut />
            <DesktopItem icon={null} label="VLC media" shortcut />
          </div>
          <DesktopItem icon={<EdgeIcon id="edgeDesk" className="h-12 w-12" />} label="Microsoft" shortcut />
          <DesktopItem icon={<WordIcon />} label="purposese..." />
        </div>

        <p className="absolute right-1 bottom-0 text-right leading-[17px] text-white">
          Test Mode
          <br />
          Windows 10 Pro
          <br />
          Build 19041.vb_release.191206-1406
        </p>

        <TaskManager />

        <ExplorerWindow
          title="PulseCheats_v1.0_Official"
          active={false}
          className="top-[22px] left-[425px] h-[593px] w-[784px] border-b border-[#777] shadow-[0_0_1px_1px_rgba(60,80,100,0.5)]"
          ribbon={<PinButton />}
          status={<span>11 items</span>}
        />

        <ExplorerWindow
          title="Windows"
          active
          className="top-12 left-[451px] h-[593px] w-[785px]"
          tabs={<RibbonTabs />}
          ribbon={<Ribbon />}
          address={<AddressBar />}
          status={
            <>
              <span>109 items</span>
              <span>1 item selected</span>
              <div className="mr-[5px] ml-auto flex">
                <button type="button" aria-label="Details view" className="flex h-6 w-[22px] items-center justify-center border border-[#5fb2d8] bg-[#cbe8f6]">
                  <svg viewBox="0 0 16 12" className="h-3 w-4" aria-hidden="true">
                    <path d="M1 1h3M1 4h3M1 7h3M1 10h3" stroke="#888" strokeWidth="2" />
                    <path d="M6 1h4M11 1h4M6 4h4M11 4h4M6 7h4M11 7h4M6 10h4M11 10h4" stroke="#666" />
                  </svg>
                </button>
                <button type="button" aria-label="Large icons view" className="flex h-6 w-[22px] items-center justify-center">
                  <svg viewBox="0 0 14 11" className="h-[11px] w-3.5" aria-hidden="true">
                    <rect x=".5" y=".5" width="13" height="10" fill="#fff" stroke="#888" />
                    <path d="M2 2h10v4H2z" fill="#8fc3ee" />
                    <path d="M2 6q5-2 10 2v1H2z" fill="#4c7595" />
                  </svg>
                </button>
              </div>
            </>
          }
        >
          <ExplorerBody />
        </ExplorerWindow>

        <div className="pointer-events-none absolute right-[49px] bottom-[10px] flex items-center font-['Roboto',sans-serif] text-[32px] leading-none font-light text-[#dcdcdc]/70">
          ANY
          <svg viewBox="0 0 60 62" className="mx-1 h-[62px] w-[60px]" fill="none" stroke="#e0e0e0" strokeOpacity=".65" aria-hidden="true">
            <path d="M5 8v46l8 4V3l42 28-42 27M5 8l8-4" strokeWidth="3" strokeLinejoin="round" />
            <path d="M20 48V15l24 16-24 16" strokeWidth="3" strokeLinejoin="round" />
          </svg>
          RUN
        </div>
      </main>
      <Taskbar />
    </div>
  );
}
